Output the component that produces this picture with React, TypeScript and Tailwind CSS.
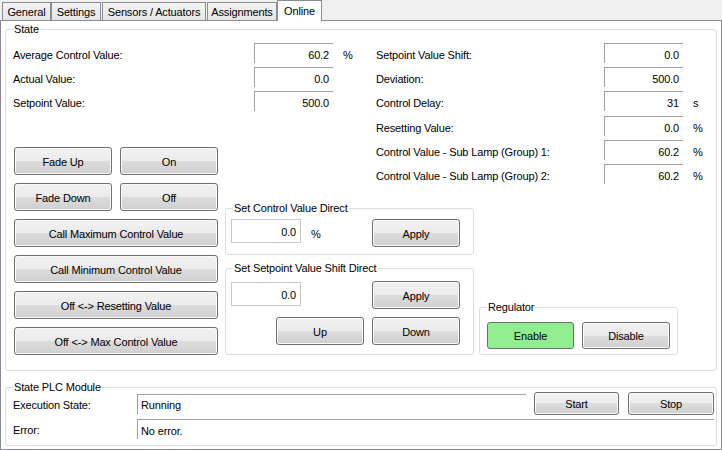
import type { ReactNode } from "react"
import clsx from "clsx"

function Btn({ children, className, green }: { children: ReactNode; className?: string; green?: boolean }) {
  return (
    <div
      className={clsx(
        "flex shrink-0 items-center justify-center rounded-[3px] border border-[#707070] pt-[2px] text-black",
        green
          ? "bg-[#90ee90]"
          : "bg-[linear-gradient(180deg,#f2f2f2_0%,#ebebeb_50%,#dddddd_50%,#cfcfcf_100%)] shadow-[inset_0_0_0_1px_#fbfbfb]",
        className
      )}
    >
      {children}
    </div>
  )
}

function Group({ title, className, children }: { title: string; className?: string; children?: ReactNode }) {
  return (
    <div className={clsx("relative shrink-0 rounded-[3px] border border-[#d5dfe5]", className)}>
      <span className="absolute -top-[7px] left-[7px] bg-white px-px leading-[13px]">{title}</span>
      {children}
    </div>
  )
}

function Field({ label, value, unit, wide }: { label: string; value: string; unit?: string; wide?: boolean }) {
  return (
    <div className="flex h-[20px] items-center">
      <span className={clsx("pt-[4px]", wide ? "w-[241px]" : "w-[228px]")}>{label}</span>
      <div className="flex h-full w-[79px] items-center justify-end border-t border-l border-[#a0a0a0] pr-[4px] pt-[4px]">
        {value}
      </div>
      {unit && <span className="ml-[10px] pt-[4px]">{unit}</span>}
    </div>
  )
}

function Input({ value }: { value: string }) {
  return (
    <div className="flex h-[24px] w-[70px] shrink-0 items-center justify-end border border-[#c9c9c9] bg-white pr-[4px] pt-[3px]">
      {value}
    </div>
  )
}

const tabs = [
  { name: "General", w: "w-[49px]" },
  { name: "Settings", w: "w-[50px]" },
  { name: "Sensors / Actuators", w: "ml-[1px] w-[104px]" },
  { name: "Assignments", w: "ml-[1px] w-[70px]" },
]

export default function App() {
  return (
    <div className="flex h-[450px] w-[722px] flex-col overflow-hidden bg-[#f0f0f0] font-['Liberation_Sans',Arial,sans-serif] text-[11px] tracking-[-0.15px] text-black">
      {/* Tabs */}
      <div className="flex h-[20px] items-end pl-[2px]">
        {tabs.map((t) => (
          <div
            key={t.name}
            className={clsx(
              "flex h-[18px] items-center justify-center border border-b-0 border-[#898c95] bg-[linear-gradient(180deg,#f5f5f5,#e4e4e4)] pt-[2px]",
              t.w
            )}
          >
            {t.name}
          </div>
        ))}
        <div className="relative z-10 -mb-px flex h-[21px] w-[45px] items-start justify-center border border-b-0 border-[#898c95] bg-white pt-[2px]">
          Online
        </div>
      </div>

      {/* Tab page */}
      <div className="flex flex-1 flex-col border border-[#898c95] bg-white px-[4px]">
        <Group title="State" className="mt-[8px] h-[342px]">
          <div className="flex pl-[7px] pt-[13px]">
            {/* Left half */}
            <div className="w-[363px] shrink-0">
              <div className="flex flex-col gap-[4px]">
                <Field wide label="Average Control Value:" value="60.2" unit="%" />
                <Field wide label="Actual Value:" value="0.0" />
                <Field wide label="Setpoint Value:" value="500.0" />
              </div>

              <div className="mt-[36px] flex w-max">
                <div className="ml-[1px] flex w-[204px] flex-col gap-[8px]">
                  <div className="flex gap-[8px]">
                    <Btn className="h-[28px] w-[98px]">Fade Up</Btn>
                    <Btn className="h-[28px] w-[98px]">On</Btn>
                  </div>
                  <div className="flex gap-[8px]">
                    <Btn className="h-[28px] w-[98px]">Fade Down</Btn>
                    <Btn className="h-[28px] w-[98px]">Off</Btn>
                  </div>
                  <Btn className="h-[28px] w-full">Call Maximum Control Value</Btn>
                  <Btn className="h-[28px] w-full">Call Minimum Control Value</Btn>
                  <Btn className="h-[28px] w-full">Off &lt;-&gt; Resetting Value</Btn>
                  <Btn className="h-[28px] w-full">Off &lt;-&gt; Max Control Value</Btn>
                </div>

                <div className="ml-[7px] mt-[61px] flex w-[249px] flex-col">
                  <Group title="Set Control Value Direct" className="h-[47px]">
                    <div className="flex items-start pl-[5px] pt-[10px]">
                      <Input value="0.0" />
                      <span className="ml-[10px] flex h-[28px] items-center pt-[2px]">%</span>
                      <Btn className="ml-auto mr-[13px] h-[28px] w-[88px]">Apply</Btn>
                    </div>
                  </Group>
                  <Group title="Set Setpoint Value Shift Direct" className="mt-[13px] h-[87px]">
                    <div className="flex items-start pl-[5px] pt-[12px]">
                      <div className="mt-[1px]">
                        <Input value="0.0" />
                      </div>
                      <Btn className="ml-auto mr-[13px] h-[28px] w-[88px]">Apply</Btn>
                    </div>
                    <div className="mr-[13px] mt-[8px] flex justify-end gap-[8px]">
                      <Btn className="h-[28px] w-[88px]">Up</Btn>
                      <Btn className="h-[28px] w-[88px]">Down</Btn>
                    </div>
                  </Group>
                </div>
              </div>
            </div>

            {/* Right half */}
            <div className="flex flex-col">
              <div className="flex flex-col gap-[4px]">
                <Field label="Setpoint Value Shift:" value="0.0" />
                <Field label="Deviation:" value="500.0" />
                <Field label="Control Delay:" value="31" unit="s" />
              </div>
              <div className="mt-[5px] flex flex-col gap-[4px]">
                <Field label="Resetting Value:" value="0.0" unit="%" />
                <Field label="Control Value - Sub Lamp (Group) 1:" value="60.2" unit="%" />
                <Field label="Control Value - Sub Lamp (Group) 2:" value="60.2" unit="%" />
              </div>
              <Group title="Regulator" className="ml-[103px] mt-[123px] h-[48px] w-[199px]">
                <div className="flex gap-[8px] pl-[7px] pt-[14px]">
                  <Btn green className="h-[27px] w-[87px]">Enable</Btn>
                  <Btn className="h-[27px] w-[88px]">Disable</Btn>
                </div>
              </Group>
            </div>
          </div>
        </Group>

        <Group title="State PLC Module" className="mt-[16px] h-[59px]">
          <div className="flex flex-col pl-[7px] pt-[4px]">
            <div className="flex h-[23px] items-center">
              <span className="w-[124px] pt-[3px]">Execution State:</span>
              <div className="flex h-[20px] w-[389px] items-center border-t border-l border-[#a0a0a0] pl-[3px] pt-[3px]">
                Running
              </div>
              <Btn className="ml-[8px] h-[23px] w-[85px]">Start</Btn>
              <Btn className="ml-[9px] h-[23px] w-[86px]">Stop</Btn>
            </div>
            <div className="mt-[4px] flex h-[20px] items-center">
              <span className="w-[124px] pt-[3px]">Error:</span>
              <div className="flex h-[20px] w-[577px] items-center border-t border-l border-[#a0a0a0] pl-[3px] pt-[3px]">
                No error.
              </div>
            </div>
          </div>
        </Group>
      </div>
    </div>
  )
}
